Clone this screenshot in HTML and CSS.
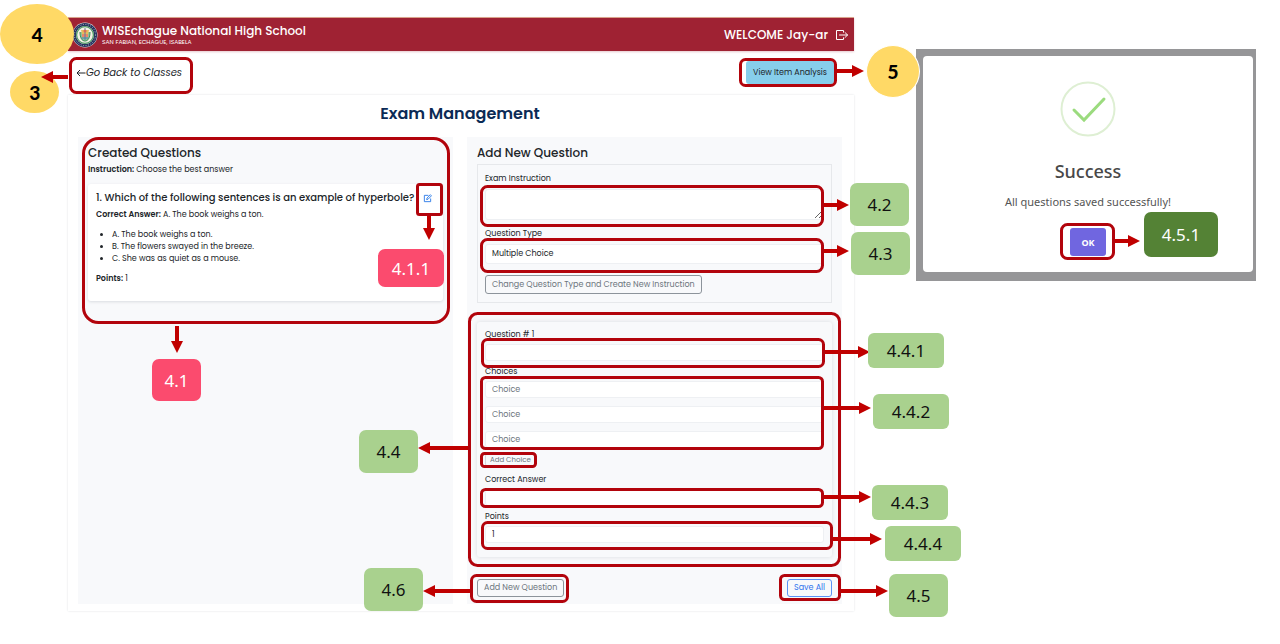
FILE: index.html
```html
<!DOCTYPE html>
<html lang="en">
<head>
<meta charset="utf-8">
<title>Exam Management</title>
<link rel="stylesheet" href="styles.css">
</head>
<body>
<div class="guide">
  <main class="app">
    <header class="topbar">
      <svg class="seal" viewBox="0 0 26 26" aria-hidden="true">
        <circle cx="13" cy="13" r="12.5" fill="#e9e6e4"/>
        <circle cx="13" cy="13" r="10.6" fill="none" stroke="#26345f" stroke-width="3"/>
        <circle cx="13" cy="13" r="10.6" fill="none" stroke="#aab2c4" stroke-width="1" stroke-dasharray="1 1.5"/>
        <circle cx="13" cy="13" r="8.4" fill="#f3f0e6" stroke="#4c9a62" stroke-width="1.2"/>
        <path d="M8 10c0 6 2 9 5 9s5-3 5-9" fill="#8fc39a" stroke="#3f8f58"/>
        <path d="M9 8h8l-1 4h-6z" fill="#e5bd5a"/>
        <path d="M10 12h6v3h-6z" fill="#e98a68"/>
        <path d="M13 6v12M9.500 16h7" stroke="#4d78ad" stroke-width=".9"/>
        <circle cx="13" cy="9" r="1.500" fill="#d56a5c"/>
      </svg>
      <div class="school">
        <h1>WISEchague National High School</h1>
        <p>SAN FABIAN, ECHAGUE, ISABELA</p>
      </div>
      <span class="welcome">WELCOME Jay-ar</span>
      <a class="logout" href="#" aria-label="Log out">
        <svg viewBox="0 0 14 12" fill="none" stroke="currentColor" stroke-linecap="round" stroke-linejoin="round"><path d="M8.500 3.200V1.500H1.500v9h7V8.800M4.500 6h8M10 3.500 12.600 6 10 8.500"/></svg>
      </a>
    </header>
    <nav class="toolbar">
      <a class="back" href="#"><svg viewBox="0 0 10 8" fill="none" stroke="currentColor" aria-hidden="true"><path d="M9.500 4H1M4 1 1 4l3 3"/></svg>Go Back to Classes</a>
      <button class="analysis" type="button">View Item Analysis</button>
    </nav>
    <section class="sheet">
      <h2>Exam Management</h2>
      <div class="columns">
        <section class="panel">
          <h3>Created Questions</h3>
          <p class="small"><b>Instruction:</b> Choose the best answer</p>
          <article class="question">
            <div class="question-head">
              <h4>1. Which of the following sentences is an example of hyperbole?</h4>
              <button class="edit" type="button" aria-label="Edit question"><svg viewBox="0 0 10 10" fill="none" stroke="currentColor"><path d="M6 1.500H1.500v7h7V5M4 6.200l.4-1.600L8.200.8l1.200 1.200-3.800 3.800z"/></svg></button>
            </div>
            <p class="small"><b>Correct Answer:</b> A. The book weighs a ton.</p>
            <ul>
              <li>A. The book weighs a ton.</li>
              <li>B. The flowers swayed in the breeze.</li>
              <li>C. She was as quiet as a mouse.</li>
            </ul>
            <p class="small"><b>Points:</b> 1</p>
          </article>
        </section>
        <form class="panel">
          <h3>Add New Question</h3>
          <div class="setup">
            <label for="instruction">Exam Instruction</label>
            <textarea id="instruction"></textarea>
            <label class="spaced" for="type">Question Type</label>
            <select id="type"><option>Multiple Choice</option></select>
            <button class="outline change" type="button">Change Question Type and Create New Instruction</button>
          </div>
          <div class="entry">
            <label for="q1">Question # 1</label>
            <input id="q1" type="text">
            <label for="c1">Choices</label>
            <div class="choices">
              <input id="c1" type="text" placeholder="Choice">
              <input type="text" placeholder="Choice" aria-label="Choice 2">
              <input type="text" placeholder="Choice" aria-label="Choice 3">
            </div>
            <button class="outline add-choice" type="button">Add Choice</button>
            <label for="answer">Correct Answer</label>
            <input id="answer" type="text">
            <label for="points">Points</label>
            <input id="points" type="text" inputmode="numeric" value="1">
          </div>
          <div class="actions">
            <button class="outline" type="button">Add New Question</button>
            <button class="outline save" type="button">Save All</button>
          </div>
        </form>
      </div>
    </section>
  </main>

  <aside class="backdrop">
    <div class="dialog" role="dialog" aria-labelledby="done">
      <svg class="tick" viewBox="0 0 56 56" fill="none" aria-hidden="true"><circle cx="28" cy="28" r="26.500" stroke="#deefd3" stroke-width="2"/><path d="M14 29l10 10 20-21" stroke="#9bdb7e" stroke-width="3" stroke-linecap="round"/></svg>
      <h2 id="done">Success</h2>
      <p>All questions saved successfully!</p>
      <button type="button">OK</button>
    </div>
  </aside>

  <svg class="marks" aria-hidden="true">
    <defs>
      <marker id="head" markerUnits="userSpaceOnUse" markerWidth="12" markerHeight="12" refX="0" refY="6" orient="auto"><path d="M0 0l12 6-12 6z" fill="#c00000"/></marker>
    </defs>
    <g class="frames">
      <rect x="70.500" y="58.500" width="121" height="34" rx="6"/>
      <rect x="740.500" y="59.500" width="95" height="26" rx="5"/>
      <rect x="83.500" y="138.500" width="365" height="184" rx="15"/>
      <rect x="417.500" y="184.500" width="24" height="30" rx="2"/>
      <rect x="481.500" y="186.500" width="341" height="39" rx="6"/>
      <rect x="481.500" y="239.500" width="341" height="32" rx="6"/>
      <rect x="469.500" y="313.500" width="370" height="252" rx="8"/>
      <rect x="482.500" y="339.500" width="341" height="27" rx="5"/>
      <rect x="481.500" y="377.500" width="341" height="71" rx="4"/>
      <rect x="481.500" y="453.500" width="54" height="13" rx="3"/>
      <rect x="481.500" y="489.500" width="341" height="17" rx="4"/>
      <rect x="482.500" y="522.500" width="349" height="26" rx="5"/>
      <rect x="471.500" y="575.500" width="96" height="26" rx="5"/>
      <rect x="780.500" y="575.500" width="59" height="24" rx="4"/>
      <rect x="1061.500" y="224.500" width="52" height="34" rx="6"/>
    </g>
    <g class="arrows">
      <path d="M68 77H53"/>
      <path d="M837 71H852"/>
      <path d="M177 326V341"/>
      <path d="M429 216V228"/>
      <path d="M824 205H837"/>
      <path d="M824 251H837"/>
      <path d="M825 352H858"/>
      <path d="M824 408H859"/>
      <path d="M824 497H859"/>
      <path d="M833 539H870"/>
      <path d="M841 591H876"/>
      <path d="M470 591H435"/>
      <path d="M468 448H430"/>
      <path d="M1115 241H1128"/>
    </g>
  </svg>
  <span class="dot n4">4</span>
  <span class="dot n3">3</span>
  <span class="dot n5">5</span>
  <span class="tag rose n41">4.1</span>
  <span class="tag rose n411">4.1.1</span>
  <span class="tag n42">4.2</span>
  <span class="tag n43">4.3</span>
  <span class="tag n44">4.4</span>
  <span class="tag wide n441">4.4.1</span>
  <span class="tag wide n442">4.4.2</span>
  <span class="tag wide n443">4.4.3</span>
  <span class="tag wide n444">4.4.4</span>
  <span class="tag n45">4.5</span>
  <span class="tag forest n451">4.5.1</span>
  <span class="tag n46">4.6</span>
</div>
</body>
</html>
```
FILE: styles.css
```css
* { box-sizing: border-box; }
body { margin: 0; background: #fff; color: #212529; font-family: Poppins, Inter, sans-serif; }
h1, h2, h3, h4, p, ul { margin: 0; }
button, input, select, textarea { font: inherit; color: inherit; }

.guide {
  position: relative;
  display: grid;
  grid-template-columns: 786fr 340fr;
  column-gap: 62px;
  align-items: start;
  padding: 17px 24px 32px 68px;
}

/* Application page */
.topbar {
  display: flex;
  align-items: center;
  height: 34px;
  padding: 0 5px 0 4px;
  background: #9f2233;
  border-top: 1px solid #d8a48c;
  box-shadow: 0 1px 2px #e6c8cc;
  color: #fff;
}
.seal { width: 26px; height: 26px; margin-right: 4px; }
.school { flex: 1; }
.school h1 { font-size: 12px; line-height: 15px; font-weight: 500; }
.school p { font-size: 6px; line-height: 8px; }
.welcome { font-size: 12px; line-height: 16px; font-weight: 500; }
.logout { display: flex; margin-left: 7px; color: #fff; }
.logout svg { width: 14px; height: 12px; }
.toolbar { display: flex; justify-content: space-between; height: 44px; padding: 10px 20px 11px 8px; }
.back { display: flex; align-items: center; color: #212529; font-size: 10px; font-style: italic; text-decoration: none; }
.back svg { width: 10px; height: 8px; }
.analysis { width: 88px; padding: 0; border: 0; border-radius: 3px; background: #87ceeb; font-size: 8px; }
.sheet { padding: 8px 12px 7px 10px; box-shadow: 0 0 2px #dfe1e4; }
.sheet > h2 { margin-bottom: 12px; color: #0b2a55; font-size: 16px; line-height: 22px; font-weight: 600; text-align: center; }
.columns { display: grid; grid-template-columns: 1fr 1fr; gap: 14px; }
.panel { padding: 7px 10px; background: #f8f9fb; font-size: 8px; line-height: 12px; }
.panel h3 { margin-bottom: 2px; font-size: 12px; line-height: 18px; font-weight: 500; }
.small b { font-weight: 600; }
.question { margin-top: 8px; padding: 7px 8px 16px; border-radius: 3px; background: #fff; box-shadow: 0 1px 3px #d9dce0; }
.question-head { display: flex; align-items: center; justify-content: space-between; margin-bottom: 4px; white-space: nowrap; }
.question h4 { font-size: 10px; line-height: 14px; font-weight: 500; }
.edit { display: flex; margin-right: 3px; padding: 0; border: 0; background: none; color: #2878e8; }
.edit svg { width: 9px; height: 9px; }
.question ul { margin: 8px 0; padding-left: 16px; }

.setup { padding: 8px 7px 7px; border: 1px solid #e6e8eb; }
label { display: block; margin: 5px 0 3px; line-height: 12px; }
.setup label { margin-bottom: 4px; }
.setup label:first-child, .entry label:first-child { margin-top: 0; }
.setup label.spaced { margin-top: 8px; }
input, textarea, select {
  display: block;
  width: 100%;
  height: 17px;
  padding: 0 6px;
  border: 1px solid #eef0f3;
  border-radius: 3px;
  background: #fff;
  line-height: 12px;
}
textarea { height: 31px; resize: vertical; }
select { height: 20px; appearance: none; }
input::placeholder { color: #6c757d; opacity: 1; }
.outline { padding: 0 6px; border: 1px solid #8d949b; border-radius: 3px; background: transparent; color: #6c757d; line-height: 16px; }
.change { display: block; height: 19px; margin: 11px 0 1px; }
.entry { margin-top: 19px; padding: 7px 8px 14px; border-radius: 3px; box-shadow: 0 0 4px #d9dce0; }
.choices { display: grid; gap: 8px; }
.add-choice { display: block; height: 14px; margin: 5px 0 7px; padding: 0 4px; border-color: #d5d8dc; font-size: 7px; line-height: 12px; }
.actions { display: flex; justify-content: space-between; margin-top: 22px; }
.save { border-color: #5b93f5; color: #2f74ee; }

/* Confirmation dialog */
.backdrop { margin-top: 32px; padding: 7px 3px 9px 7px; background: #969698; }
.dialog {
  display: flex;
  flex-direction: column;
  align-items: center;
  padding: 25px 10px 16px;
  border-radius: 4px;
  background: #fff;
  color: #545454;
  font-family: "Segoe UI", "Noto Sans", sans-serif;
}
.tick { width: 56px; height: 56px; }
.dialog h2 { margin-top: 22px; font-size: 18px; line-height: 24px; font-weight: 500; color: #484848; }
.dialog p { margin: 10px 0 18px; font-size: 11px; line-height: 17px; }
.dialog button { width: 36px; height: 28px; padding: 0; border: 0; border-radius: 3px; background: #7066e0; color: #fff; font-size: 9px; font-weight: 700; }

/* Callouts drawn over the page */
.marks { position: absolute; left: 0; top: 0; width: 100%; height: 100%; pointer-events: none; }
.frames { fill: none; stroke: #b2040c; stroke-width: 3; }
.arrows { fill: none; stroke: #c00000; stroke-width: 4; }
.arrows path { marker-end: url(#head); }
.dot, .tag { position: absolute; display: flex; align-items: center; justify-content: center; }
.dot { border-radius: 50%; background: #ffd966; color: #000; font-family: Calibri, "Open Sans", sans-serif; font-size: 22px; font-weight: 700; }
.tag { width: 59px; height: 43px; border-radius: 7px; background: #a9d18e; color: #111; font-family: "Segoe UI", "Noto Sans", sans-serif; font-size: 17px; }
.wide { width: 76px; height: 35px; border-radius: 6px; }
.rose { background: #fb4b6e; color: #fff; }
.forest { background: #548235; color: #fff; }
.n4 { left: 0; top: 4px; width: 74px; height: 60px; }
.n3 { left: 10px; top: 71px; width: 49px; height: 42px; z-index: -1; }
.n5 { left: 866px; top: 45px; width: 54px; height: 53px; border: 1px solid #fff; }
.n41 { left: 152px; top: 359px; width: 49px; height: 42px; }
.n411 { left: 378px; top: 249px; width: 66px; height: 38px; }
.n42 { left: 850px; top: 183px; }
.n43 { left: 851px; top: 232px; }
.n44 { left: 359px; top: 430px; }
.n441 { left: 868px; top: 333px; }
.n442 { left: 873px; top: 394px; }
.n443 { left: 872px; top: 485px; }
.n444 { left: 885px; top: 526px; }
.n45 { left: 889px; top: 574px; }
.n451 { left: 1144px; top: 212px; width: 74px; height: 45px; }
.n46 { left: 364px; top: 568px; }
```
